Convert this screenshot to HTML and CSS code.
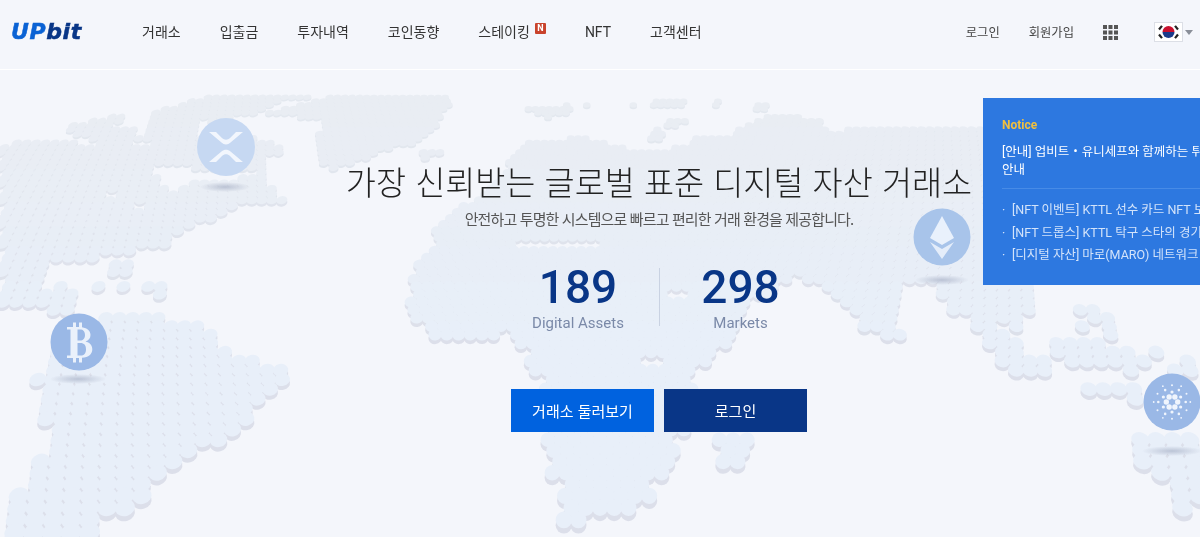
FILE: index.html
```html
<!DOCTYPE html>
<html lang="ko">
<head>
<meta charset="utf-8">
<title>Upbit</title>
<link rel="stylesheet" href="styles.css">
</head>
<body>
<div class="page">
  <canvas id="map" class="map" width="1200" height="537"></canvas>

  <header class="header">
    <a class="logo"><span class="logo-up">UP</span><span class="logo-bit">bit</span></a>
    <nav class="nav">
      <a>거래소</a>
      <a>입출금</a>
      <a>투자내역</a>
      <a>코인동향</a>
      <a class="nav-badged">스테이킹<span class="badge">N</span></a>
      <a>NFT</a>
      <a>고객센터</a>
    </nav>
    <div class="util">
      <a class="util-login">로그인</a>
      <a class="util-join">회원가입</a>
      <svg class="grid-icon" width="15" height="15" viewBox="0 0 15 15" fill="#555">
        <rect width="4" height="4"/><rect x="5.5" width="4" height="4"/><rect x="11" width="4" height="4"/>
        <rect y="5.5" width="4" height="4"/><rect x="5.5" y="5.5" width="4" height="4"/><rect x="11" y="5.5" width="4" height="4"/>
        <rect y="11" width="4" height="4"/><rect x="5.5" y="11" width="4" height="4"/><rect x="11" y="11" width="4" height="4"/>
      </svg>
      <svg class="flag" width="29" height="20" viewBox="0 0 29 20">
        <rect x=".5" y=".5" width="28" height="19" fill="#fff" stroke="#dcdfe6"/>
        <path d="M8.5 10a6 6 0 0 1 12 0z" fill="#c8102e"/>
        <path d="M8.5 10a6 6 0 0 0 12 0z" fill="#1a3a8a"/>
        <g stroke="#222" stroke-width="2.2">
          <path d="M5 7.5l3-3.6"/><path d="M21 3.9l3 3.6"/><path d="M5 12.5l3 3.6"/><path d="M21 16.1l3-3.6"/>
        </g>
      </svg>
      <svg class="caret" width="8" height="5" viewBox="0 0 8 5"><path d="M0 0h8L4 5z" fill="#8a8f99"/></svg>
    </div>
  </header>

  <div class="coin coin-xrp">
    <svg width="58" height="58" viewBox="-29 -29 58 58">
      <circle r="29" fill="#c6d8f2"/>
      <path d="M-17-15h7l6 6c2.400 2.300 5.600 2.300 8 0l6-6h7L4.500-4.500c-2.600 2.500-6.400 2.500-9 0zM-17 15h7l6-6c2.400-2.300 5.600-2.300 8 0l6 6h7L4.500 4.500c-2.600-2.500-6.400-2.500-9 0z" fill="#f2f6fd"/>
    </svg>
  </div>
  <div class="coin-shadow shadow-xrp"></div>

  <div class="coin coin-eth">
    <svg width="58" height="58" viewBox="-29 -29 58 58">
      <circle r="28.500" fill="#a8c4ea"/>
      <path d="M0-21L-12 1 0 8 12 1z" fill="#e9f1fc"/>
      <path d="M-12 5L0 12 12 5 0 22z" fill="#e4edfa"/>
    </svg>
  </div>
  <div class="coin-shadow shadow-eth"></div>

  <div class="coin coin-btc">
    <svg width="58" height="58" viewBox="-29 -29 58 58">
      <circle r="28.500" fill="#9ab8e6"/>
      <path fill-rule="evenodd" fill="#eaf1fb" d="M-12-15h6v-4.500h3v4.500h3v-4.500h3v4.700c5.500 1 8.500 3.700 8.500 7.800 0 3.200-1.800 5.500-5 6.600 4.200 1 6.800 3.800 6.800 7.700 0 5-3.700 8-10.300 8.500v4.700h-3V16h-3v4.500h-3V16h-6v-2.500h3.500v-26H-12zM-1.500-12.500v11H1c3.200 0 5-2 5-5.500s-1.800-5.500-5-5.500zM-1.500 1v12.500H1.500c3.600 0 5.500-2.200 5.500-6.300S5.100 1 1.500 1z"/>
    </svg>
  </div>
  <div class="coin-shadow shadow-btc"></div>

  <div class="coin coin-ada">
    <svg width="58" height="58" viewBox="-29 -29 58 58">
      <circle r="28.500" fill="#9ab8e6"/>
      <g fill="#f0f5fd">
        <circle cx="5.700" r="2.700"/><circle cx="-5.700" r="2.700"/><circle cx="2.850" cy="-4.940" r="2.700"/><circle cx="-2.850" cy="-4.940" r="2.700"/><circle cx="2.850" cy="4.940" r="2.700"/><circle cx="-2.850" cy="4.940" r="2.700"/>
        <circle cy="-10" r="1.600"/><circle cy="10" r="1.600"/><circle cx="8.660" cy="-5" r="1.600"/><circle cx="-8.660" cy="-5" r="1.600"/><circle cx="8.660" cy="5" r="1.600"/><circle cx="-8.660" cy="5" r="1.600"/>
        <circle cx="13.700" r="1.300"/><circle cx="-13.700" r="1.300"/><circle cx="6.850" cy="-11.900" r="1.300"/><circle cx="-6.850" cy="-11.900" r="1.300"/><circle cx="6.850" cy="11.900" r="1.300"/><circle cx="-6.850" cy="11.900" r="1.300"/>
        <circle cy="-16.700" r="1"/><circle cy="16.700" r="1"/><circle cx="14.500" cy="-8.350" r="1"/><circle cx="-14.500" cy="-8.350" r="1"/><circle cx="14.500" cy="8.350" r="1"/><circle cx="-14.500" cy="8.350" r="1"/>
        <circle cx="18.300" r=".9"/><circle cx="-18.300" r=".9"/><circle cx="9.150" cy="-15.850" r=".9"/><circle cx="-9.150" cy="-15.850" r=".9"/><circle cx="9.150" cy="15.850" r=".9"/><circle cx="-9.150" cy="15.850" r=".9"/>
      </g>
    </svg>
  </div>
  <div class="coin-shadow shadow-ada"></div>

  <main class="hero">
    <h1 class="hero-title">가장 신뢰받는 글로벌 표준 디지털 자산 거래소</h1>
    <p class="hero-sub">안전하고 투명한 시스템으로 빠르고 편리한 거래 환경을 제공합니다.</p>
    <div class="stats">
      <div class="stat">
        <strong class="stat-num">189</strong>
        <span class="stat-label">Digital Assets</span>
      </div>
      <div class="stat stat-right">
        <strong class="stat-num">298</strong>
        <span class="stat-label">Markets</span>
      </div>
    </div>
    <div class="actions">
      <a class="btn btn-blue">거래소 둘러보기</a>
      <a class="btn btn-navy">로그인</a>
    </div>
  </main>

  <aside class="notice">
    <h2 class="notice-head">Notice</h2>
    <p class="notice-title">[안내] 업비트・유니세프와 함께하는 튀르키예 지진 긴급구호 기부 캠페인<br>안내</p>
    <ul class="notice-list">
      <li>[NFT 이벤트] KTTL 선수 카드 NFT 보유자 이벤트 안내</li>
      <li>[NFT 드롭스] KTTL 탁구 스타의 경기 카드 NFT 안내</li>
      <li>[디지털 자산] 마로(MARO) 네트워크 업그레이드 안내</li>
    </ul>
  </aside>
</div>
<script src="map.js"></script>
</body>
</html>
```

FILE: styles.css
```css
* { box-sizing: border-box; }
html, body { margin: 0; height: 100%; }
body {
  background: #f4f6fb;
  color: #333;
  font-family: Roboto, "Noto Sans CJK KR", sans-serif;
  overflow: hidden;
}
.page { position: relative; width: 1200px; height: 537px; overflow: hidden; }
.map { position: absolute; top: 0; left: 0; filter: blur(.5px); }

.header {
  position: relative;
  display: flex;
  align-items: center;
  height: 70px;
  padding: 0 7px 5px 11px;
  border-bottom: 1px solid #fff;
}
.logo {
  width: 131px;
  font: italic bold 22px/1 "DejaVu Sans", sans-serif;
  letter-spacing: .6px;
  -webkit-text-stroke: .5px currentColor;
}
.logo-up { color: #0a62d4; }
.logo-bit { color: #093687; }
.nav { display: flex; align-items: center; gap: 39px; font-size: 14px; line-height: 20px; color: #333; }
.nav-badged { display: flex; align-items: flex-start; gap: 5px; }
.badge {
  width: 11px;
  height: 11px;
  margin-top: 1px;
  border-radius: 1px;
  background: #c9432c;
  color: #fff;
  font-size: 9px;
  font-weight: 700;
  line-height: 11px;
  text-align: center;
}
.util { display: flex; align-items: center; margin-left: auto; font-size: 12.300px; color: #444; }
.util-login { margin-right: 29px; }
.util-join { margin-right: 29px; }
.grid-icon { margin-right: 36px; }
.flag { margin-right: 2px; }
.caret { display: block; }

.coin { position: absolute; width: 58px; height: 58px; }
.coin svg { display: block; }
.coin-xrp { left: 197px; top: 118px; }
.coin-eth { left: 913px; top: 208px; }
.coin-btc { left: 50px; top: 313px; }
.coin-ada { left: 1143px; top: 373px; }
.coin-shadow {
  position: absolute;
  height: 10px;
  border-radius: 50%;
  background: radial-gradient(closest-side, rgba(150, 160, 185, .55), rgba(150, 160, 185, 0));
}
.shadow-xrp { left: 200px; top: 182px; width: 50px; }
.shadow-eth { left: 915px; top: 275px; width: 54px; }
.shadow-btc { left: 50px; top: 374px; width: 56px; }
.shadow-ada { left: 1142px; top: 446px; width: 60px; }

.hero {
  position: relative;
  display: flex;
  flex-direction: column;
  align-items: center;
  padding: 89px 0 0 118px;
}
.hero-title {
  margin: 0;
  font-family: "Noto Sans CJK KR", sans-serif;
  font-size: 32.700px;
  font-weight: 300;
  line-height: 44px;
  color: #222;
  white-space: nowrap;
}
.hero-sub {
  margin: 5px 0 0;
  font-family: "Noto Sans CJK KR", sans-serif;
  font-size: 15px;
  line-height: 22px;
  letter-spacing: -.87px;
  color: #555;
  white-space: nowrap;
}
.stats { display: flex; margin-top: 38px; }
.stat { display: flex; flex-direction: column; align-items: center; width: 162px; height: 58px; }
.stat-right { border-left: 1px solid #c9d2e2; }
.stat-num { font-size: 46px; line-height: 38px; font-weight: 500; color: #093687; }
.stat-label { margin-top: 7px; font-size: 15px; line-height: 20px; color: #7a89a8; white-space: nowrap; }
.actions { display: flex; gap: 10px; margin-top: 63px; }
.btn {
  width: 143px;
  height: 43px;
  font-family: "Noto Sans CJK KR", sans-serif;
  font-size: 15px;
  line-height: 43px;
  text-align: center;
  color: #fff;
}
.btn-blue { background: #0062df; }
.btn-navy { background: #093687; }

.notice {
  position: absolute;
  left: 983px;
  top: 98px;
  width: 320px;
  height: 187px;
  padding: 20px 0 0 19px;
  background: #2d78e0;
  font-family: Roboto, "Noto Sans CJK KR", sans-serif;
  white-space: nowrap;
}
.notice-head { margin: 0; font-size: 12px; line-height: 14px; font-weight: 700; color: #f0bf3f; }
.notice-title { margin: 11px 0 0; font-size: 12.500px; line-height: 18px; color: #fff; }
.notice-list {
  margin: 9px 0 0;
  padding: 10px 0 0;
  list-style: none;
  border-top: 1px solid #478be6;
  font-size: 12.500px;
  line-height: 22.500px;
  color: #d3e3fa;
}
.notice-list li::before { content: "·"; display: inline-block; width: 10px; }
```

FILE: map.js
```js
var lands = [
  [[0,146],[22,140],[72,140],[85,145],[148,145],[150,140],[175,135],[198,140],[195,155],[190,165],[143,168],[160,180],[175,192],[195,180],[235,178],[262,172],[280,198],[292,203],[275,205],[240,205],[225,212],[198,225],[168,235],[165,245],[150,245],[120,255],[100,258],[50,262],[50,270],[45,280],[30,290],[0,295]],
  [[112,262],[135,258],[135,275],[115,278]],
  [[78,282],[84,282],[84,288],[78,288]],
  [[95,280],[106,280],[106,292],[95,292]],
  [[118,280],[127,280],[127,288],[118,288]],
  [[140,280],[163,284],[163,296],[140,290]],
  [[0,292],[70,285],[82,305],[60,313],[40,305],[15,310],[0,305]],
  [[190,298],[197,298],[192,316],[183,316]],
  [[115,312],[145,312],[180,320],[215,332],[225,345],[235,358],[280,365],[292,380],[270,397],[250,415],[225,440],[180,455],[160,480],[145,500],[120,510],[100,525],[85,537],[0,540],[0,505],[25,480],[45,450],[60,425],[52,420],[35,418],[36,385],[40,370],[50,345],[70,325]],
  [[88,120],[120,115],[125,120],[100,128],[140,125],[140,140],[130,147],[95,147],[85,135],[60,132],[70,125]],
  [[155,110],[175,105],[190,100],[215,95],[250,96],[315,95],[313,100],[280,100],[260,112],[240,115],[215,125],[205,118],[195,118],[150,128],[150,120]],
  [[150,128],[195,118],[205,122],[195,130],[200,135],[235,135],[265,140],[290,150],[270,155],[268,165],[250,172],[200,172],[180,165],[145,150]],
  [[267,112],[280,108],[318,100],[330,97],[450,97],[453,102],[440,112],[440,128],[413,143],[400,145],[375,155],[345,165],[330,172],[315,157],[313,150],[322,125],[315,118],[270,115]],
  [[413,150],[443,148],[443,156],[420,158]],
  [[523,108],[570,104],[570,112],[548,117],[530,112]],
  [[583,103],[592,103],[592,107],[583,107]],
  [[628,103],[640,103],[640,108],[628,108]],
  [[650,100],[685,100],[685,107],[650,107]],
  [[714,101],[722,101],[722,105],[714,105]],
  [[753,103],[770,103],[770,110],[755,110]],
  [[655,130],[670,120],[687,120],[687,124],[665,128],[660,140],[643,138]],
  [[525,143],[583,137],[600,142],[640,150],[680,147],[700,135],[730,135],[755,120],[775,115],[820,118],[830,130],[990,125],[1010,285],[905,282],[900,290],[903,300],[895,305],[890,320],[905,330],[905,338],[880,335],[860,325],[855,310],[840,300],[835,290],[817,285],[790,275],[775,298],[745,300],[737,330],[733,335],[728,345],[707,360],[693,380],[693,432],[677,440],[677,467],[663,477],[653,482],[653,497],[640,505],[587,520],[560,522],[560,503],[563,480],[550,473],[550,450],[540,443],[545,413],[545,380],[535,373],[525,363],[527,350],[517,342],[510,333],[443,343],[433,337],[417,322],[403,313],[405,303],[410,293],[413,280],[413,267],[435,243],[435,230],[497,177]],
  [[718,440],[760,432],[755,455],[740,467],[720,467],[715,455]],
  [[940,285],[1035,285],[1035,315],[1020,318],[1020,328],[1000,322],[985,330],[975,328],[980,320],[960,310],[950,310],[942,295]],
  [[1068,295],[1080,305],[1095,310],[1110,315],[1123,335],[1110,335],[1095,325],[1085,313],[1070,305]],
  [[1076,322],[1086,322],[1086,332],[1076,332]],
  [[977,335],[1000,328],[1015,335],[1020,350],[1045,360],[1047,372],[1030,375],[1000,365],[992,345],[977,342]],
  [[1047,342],[1085,335],[1100,340],[1105,370],[1090,368],[1070,365],[1050,352]],
  [[1108,350],[1130,350],[1145,355],[1145,375],[1125,375],[1110,360]],
  [[1150,350],[1163,350],[1163,360],[1150,360]],
  [[1173,358],[1200,358],[1200,375],[1173,375]],
  [[1080,380],[1105,380],[1105,393],[1080,393]],
  [[1115,380],[1128,380],[1128,393],[1115,393]],
  [[1133,388],[1143,388],[1143,400],[1133,400]],
  [[1135,432],[1200,430],[1200,520],[1188,520],[1170,495],[1155,470],[1140,465],[1132,445]]
];
var holes = [
  [[520,243],[600,243],[600,250],[520,250]],
  [[672,290],[684,290],[684,300],[672,300]],
  [[645,355],[660,355],[660,362],[645,362]],
  [[105,192],[115,192],[115,197],[105,197]],
  [[138,205],[148,205],[148,210],[138,210]]
];
function inside(p, x, y) {
  var c = false;
  for (var i = 0, j = p.length - 1; i < p.length; j = i++) {
    if ((p[i][1] > y) !== (p[j][1] > y) &&
        x < (p[j][0] - p[i][0]) * (y - p[i][1]) / (p[j][1] - p[i][1]) + p[i][0]) c = !c;
  }
  return c;
}
function any(list, x, y) {
  for (var i = 0; i < list.length; i++) if (inside(list[i], x, y)) return true;
  return false;
}
function mix(a, b, t) {
  return "rgb(" + a.map(function (v, i) { return Math.round(v + (b[i] - v) * t); }).join(",") + ")";
}
var ctx = document.getElementById("map").getContext("2d");
var cx = 600, y = 90, row = 0;
function paint(points, dy, w, ry, color) {
  ctx.fillStyle = color;
  points.forEach(function (x) {
    var stretch = 1 + 0.35 * Math.abs(x - cx) / 600;
    ctx.beginPath();
    ctx.ellipse(x, y + dy, w * 0.56 * stretch, ry, (x - cx) / 600 * 0.4, 0, Math.PI * 2);
    ctx.fill();
  });
}
while (y < 545) {
  var h = 3.6 + (y - 90) * 0.0205;
  var w = (y + 250) * 0.0186;
  var t = Math.min(1, Math.max(0, (y - 110) / 230));
  var off = row % 2 ? 0.5 : 0, points = [];
  for (var u = -90; u <= 90; u++) {
    var d = (u + off) * w;
    var x = cx + d * (1 + 0.175 * Math.abs(d) / 600);
    if (x > -20 && x < 1220 && any(lands, x, y) && !any(holes, x, y)) points.push(x);
  }
  paint(points, h * 0.42, w, h * 0.68, mix([227, 232, 239], [220, 223, 234], t));
  paint(points, 0, w, h * 0.68, mix([233, 237, 243], [232, 239, 249], t));
  y += h;
  row++;
}
```
